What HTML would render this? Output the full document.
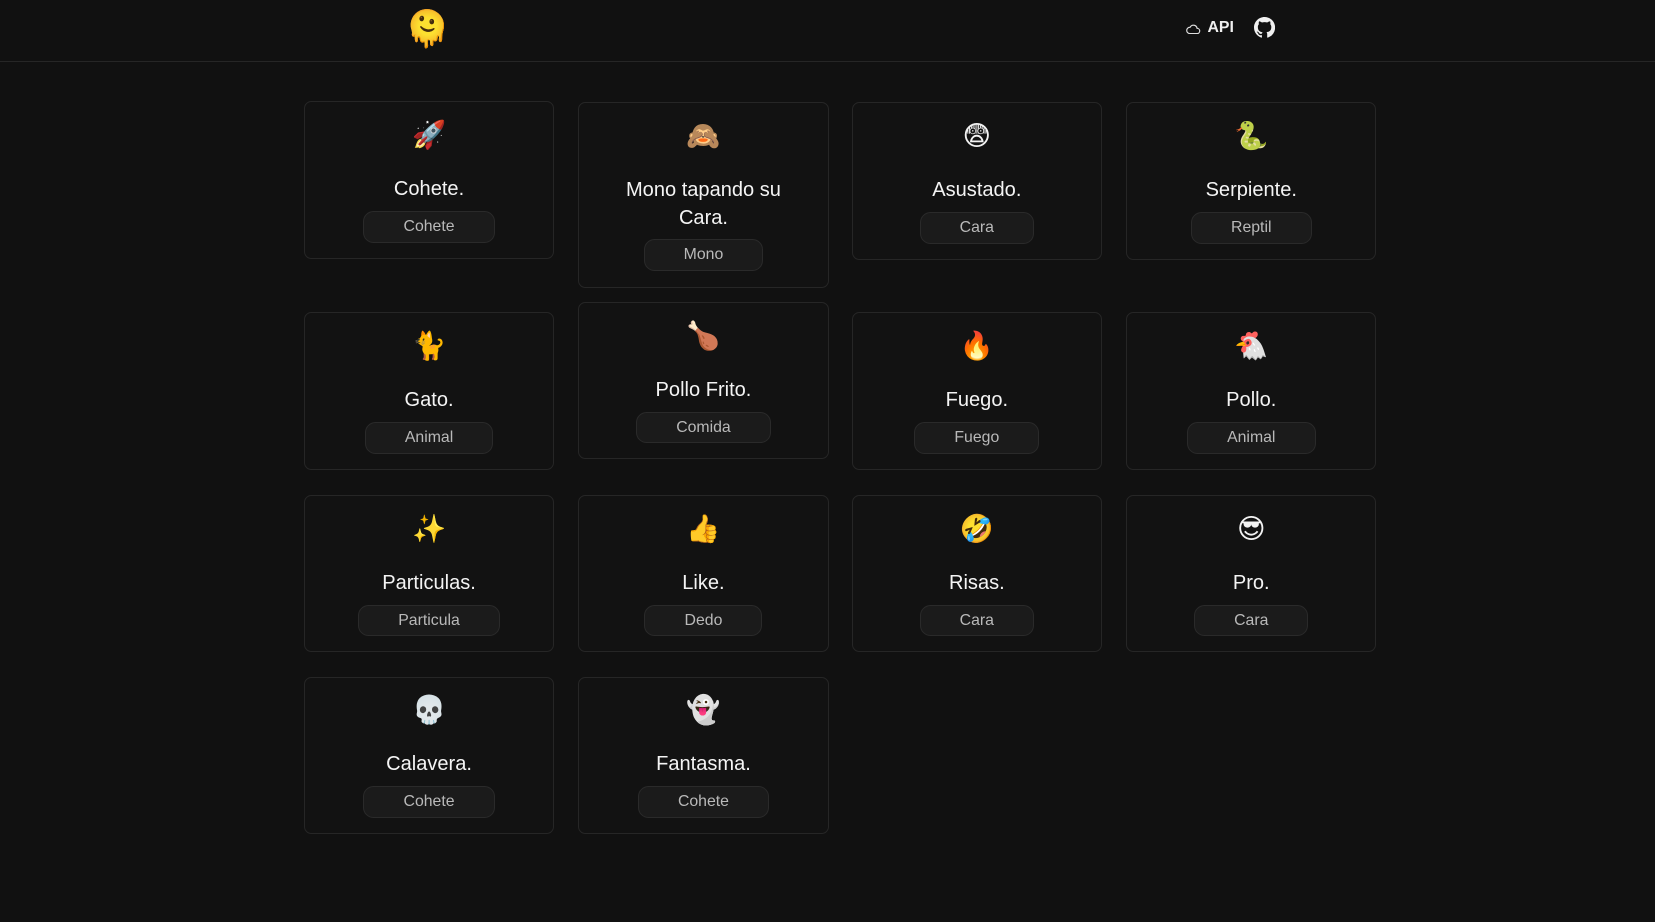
<!DOCTYPE html>
<html><head><meta charset="utf-8"><style>
html,body{margin:0;padding:0;background:#111111;}
body{width:1568px;height:874px;overflow:hidden;zoom:1.05548;position:relative;font-family:"Liberation Sans","DejaVu Sans",sans-serif;color:#f2f2f2;}
.hdr{position:absolute;left:0;top:0;width:1568px;height:58px;border-bottom:1px solid #262626;}
.logo{position:absolute;left:384px;top:8px;font-size:34px;line-height:40px;}
.api{position:absolute;left:1124px;top:18px;font-size:15px;font-weight:bold;color:#f0f0f0;display:flex;align-items:center;gap:6px;}
.gh{position:absolute;left:1188px;top:16px;}
.card{position:absolute;width:237px;border:1px solid #262626;border-radius:7px;background:#121212;display:flex;flex-direction:column;align-items:center;box-sizing:border-box;padding-top:15px;}
.em{font-size:26px;line-height:32px;height:32px;margin-bottom:23px;}
.t{font-size:19px;line-height:26px;text-align:center;color:#f4f4f4;padding:0 30px;}
.p{margin-top:7px;height:30px;line-height:28px;box-sizing:border-box;border:1px solid #2a2a2a;background:#1b1b1b;border-radius:10px;padding:0 37px;font-size:15px;color:#b9b9b9;}
</style></head><body>
<div class="hdr">
<div class="logo">🫠</div>
<div class="api"><svg width="14" height="12" viewBox="0 0 14 12" fill="none" stroke="#ddd" stroke-width="1.1"><path d="M3.5 11h7a2.5 2.5 0 0 0 0-5 3.5 3.5 0 0 0-6.6-1A3 3 0 0 0 3.5 11z"/></svg>API</div>
<svg class="gh" width="20" height="20" viewBox="0 0 16 16" fill="#f0f0f0"><path d="M8 0C3.580 0 0 3.58 0 8c0 3.54 2.29 6.53 5.47 7.59.4.07.55-.17.55-.38 0-.19-.01-.82-.01-1.49-2.01.37-2.530-.49-2.69-.94-.09-.23-.48-.94-.82-1.130-.28-.15-.68-.52-.01-.53.63-.01 1.08.58 1.23.82.72 1.21 1.87.87 2.33.66.07-.52.28-.87.51-1.07-1.78-.2-3.64-.89-3.64-3.95 0-.87.31-1.59.82-2.15-.08-.2-.36-1.02.08-2.12 0 0 .67-.21 2.2.82.64-.18 1.32-.27 2-.27.68 0 1.36.09 2 .27 1.53-1.04 2.2-.82 2.2-.82.44 1.1.16 1.92.08 2.12.51.56.82 1.27.82 2.15 0 3.07-1.87 3.75-3.65 3.95.29.25.54.73.54 1.48 0 1.07-.01 1.93-.01 2.2 0 .21.15.46.55.38A8.013 8.013 0 0016 8c0-4.42-3.58-8-8-8z"/></svg>
</div>

<div class="card" style="left:288px;top:96px;height:149px"><div class="em">🚀</div><div class="t">Cohete.</div><div class="p">Cohete</div></div>
<div class="card" style="left:548px;top:97px;height:176px"><div class="em">🙈</div><div class="t">Mono tapando su Cara.</div><div class="p">Mono</div></div>
<div class="card" style="left:807px;top:97px;height:149px"><div class="em">😨</div><div class="t">Asustado.</div><div class="p">Cara</div></div>
<div class="card" style="left:1067px;top:97px;height:149px"><div class="em">🐍</div><div class="t">Serpiente.</div><div class="p">Reptil</div></div>

<div class="card" style="left:288px;top:296px;height:149px"><div class="em">🐈</div><div class="t">Gato.</div><div class="p">Animal</div></div>
<div class="card" style="left:548px;top:286px;height:149px"><div class="em">🍗</div><div class="t">Pollo Frito.</div><div class="p">Comida</div></div>
<div class="card" style="left:807px;top:296px;height:149px"><div class="em">🔥</div><div class="t">Fuego.</div><div class="p">Fuego</div></div>
<div class="card" style="left:1067px;top:296px;height:149px"><div class="em">🐔</div><div class="t">Pollo.</div><div class="p">Animal</div></div>

<div class="card" style="left:288px;top:469px;height:149px"><div class="em">✨</div><div class="t">Particulas.</div><div class="p">Particula</div></div>
<div class="card" style="left:548px;top:469px;height:149px"><div class="em">👍</div><div class="t">Like.</div><div class="p">Dedo</div></div>
<div class="card" style="left:807px;top:469px;height:149px"><div class="em">🤣</div><div class="t">Risas.</div><div class="p">Cara</div></div>
<div class="card" style="left:1067px;top:469px;height:149px"><div class="em">😎</div><div class="t">Pro.</div><div class="p">Cara</div></div>

<div class="card" style="left:288px;top:641px;height:149px"><div class="em">💀</div><div class="t">Calavera.</div><div class="p">Cohete</div></div>
<div class="card" style="left:548px;top:641px;height:149px"><div class="em">👻</div><div class="t">Fantasma.</div><div class="p">Cohete</div></div>
</body></html>
